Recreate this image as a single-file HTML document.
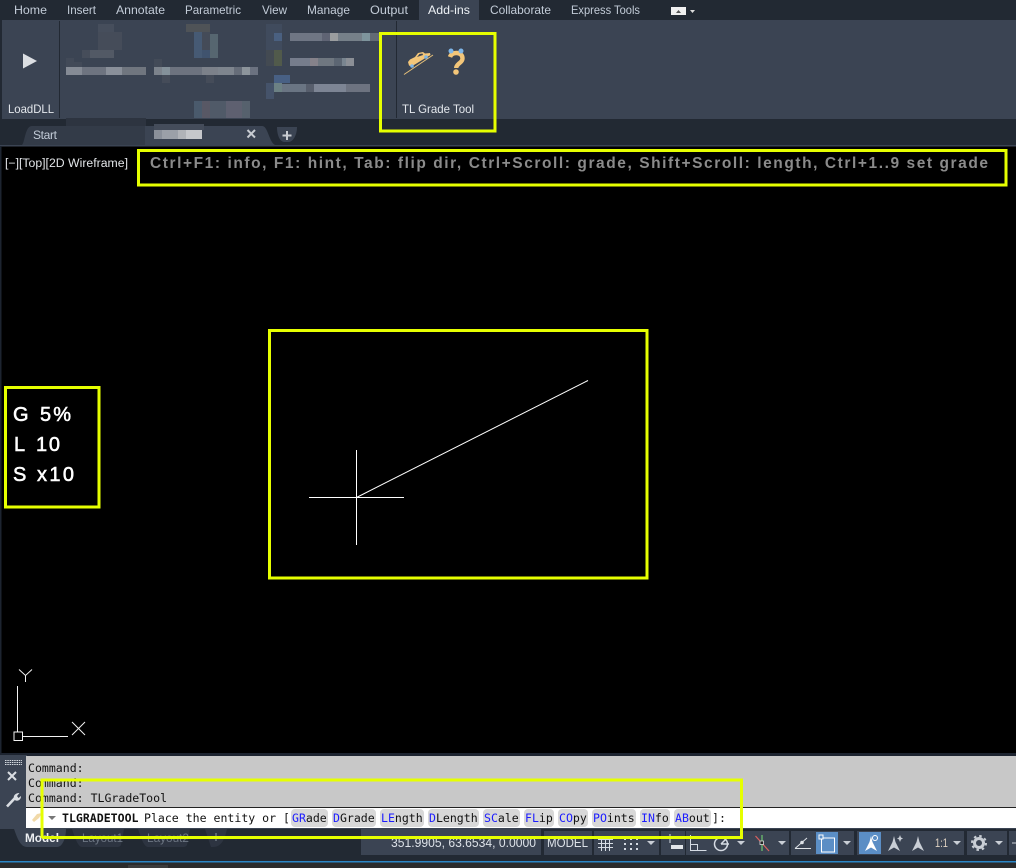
<!DOCTYPE html>
<html><head><meta charset="utf-8"><title>TL Grade Tool</title>
<style>
html,body{margin:0;padding:0;background:#000;width:1016px;height:868px;overflow:hidden}
svg{display:block}
.t{font:12px "Liberation Sans",sans-serif;fill:#c3ccd8}
.m{font:11.55px "DejaVu Sans Mono","Liberation Mono",monospace;fill:#111}
.b{fill:#1c1cff}
.h{font:bold 15.5px "Liberation Sans",sans-serif;fill:#8b8b8b}
.o{font:20px "Liberation Sans",sans-serif;fill:#fff;stroke:#fff;stroke-width:.55px}
.s{font:13px "Liberation Sans",sans-serif;fill:#dde2e8}
</style></head><body>
<svg width="1016" height="868" viewBox="0 0 1016 868" xmlns="http://www.w3.org/2000/svg">
<rect width="1016" height="868" fill="#000"/>
<!-- top tabs -->
<rect width="1016" height="20" fill="#222933"/>
<rect x="419" width="60" height="20" fill="#3b4453"/>
<g class="t">
<text x="14" y="14" textLength="33" lengthAdjust="spacingAndGlyphs">Home</text>
<text x="67" y="14" textLength="29" lengthAdjust="spacingAndGlyphs">Insert</text>
<text x="116" y="14" textLength="49" lengthAdjust="spacingAndGlyphs">Annotate</text>
<text x="185" y="14" textLength="56" lengthAdjust="spacingAndGlyphs">Parametric</text>
<text x="262" y="14" textLength="25" lengthAdjust="spacingAndGlyphs">View</text>
<text x="307" y="14" textLength="43" lengthAdjust="spacingAndGlyphs">Manage</text>
<text x="370" y="14" textLength="38" lengthAdjust="spacingAndGlyphs">Output</text>
<text x="428" y="14" textLength="42" lengthAdjust="spacingAndGlyphs" style="fill:#eef2f6">Add-ins</text>
<text x="490" y="14" textLength="61" lengthAdjust="spacingAndGlyphs">Collaborate</text>
<text x="571" y="14" textLength="69" lengthAdjust="spacingAndGlyphs">Express Tools</text>
</g>
<rect x="671" y="7" width="15" height="8" fill="#f0f0f0"/>
<path d="M676 13h5l-2.500-3z" fill="#555"/>
<path d="M690 10h5l-2.500 3z" fill="#ddd"/>
<!-- ribbon -->
<rect y="20" width="1016" height="99" fill="#3b4453"/>
<rect x="0" y="20" width="2" height="99" fill="#222933"/>
<rect x="59" y="21" width="1" height="97" fill="#222933"/>
<rect x="396" y="21" width="1" height="97" fill="#222933"/>
<path d="M23 53.500 37 61 23 68.500z" fill="#dcdfe3"/>
<text class="t" x="8" y="113" textLength="46" lengthAdjust="spacingAndGlyphs" style="fill:#e4e8ed">LoadDLL</text>
<text class="t" x="402" y="113" textLength="72" lengthAdjust="spacingAndGlyphs" style="fill:#e4e8ed">TL Grade Tool</text>
<!-- blurred -->
<g>
<rect x="98" y="24" width="16" height="8" fill="#464e5c"/><rect x="98" y="32" width="24" height="18" fill="#454c59"/><rect x="90" y="50" width="24" height="8" fill="#525965"/><rect x="82" y="50" width="8" height="8" fill="#464d5a"/><rect x="66" y="58" width="8" height="8" fill="#424a58"/>
<rect x="186" y="24" width="24" height="8" fill="#4f5357"/><rect x="194" y="32" width="8" height="26" fill="#465a74"/><rect x="202" y="32" width="8" height="26" fill="#444b58"/><rect x="210" y="34" width="8" height="24" fill="#566670"/><rect x="202" y="50" width="8" height="8" fill="#40536e"/>
<rect x="266" y="24" width="16" height="42" fill="#404b5d"/><rect x="274" y="33" width="8" height="8" fill="#4a6080"/><rect x="266" y="50" width="8" height="16" fill="#434a52"/><rect x="274" y="50" width="8" height="16" fill="#515a4b"/><rect x="274" y="75" width="16" height="8" fill="#486084"/><rect x="274" y="83" width="8" height="9" fill="#6c8184"/><rect x="266" y="83" width="8" height="16" fill="#45536a"/>
<rect x="66" y="62" width="16" height="5" fill="#424a58"/><rect x="154" y="59" width="8" height="8" fill="#434b58"/><rect x="206" y="75" width="8" height="8" fill="#454c59"/><rect x="162" y="75" width="8" height="8" fill="#454c59"/>
</g>
<g>
<rect x="66" y="67" width="16" height="8" fill="#858b95"/><rect x="82" y="67" width="24" height="8" fill="#6e7480"/><rect x="106" y="67" width="16" height="8" fill="#8a909a"/><rect x="122" y="67" width="24" height="8" fill="#70767f"/>
<rect x="154" y="67" width="8" height="8" fill="#7c838c"/><rect x="162" y="67" width="8" height="8" fill="#84919a"/><rect x="170" y="67" width="32" height="8" fill="#6d737f"/><rect x="202" y="67" width="16" height="8" fill="#7c818a"/><rect x="218" y="67" width="16" height="8" fill="#7e858e"/><rect x="234" y="67" width="8" height="8" fill="#666d79"/><rect x="242" y="67" width="8" height="8" fill="#8c949b"/><rect x="250" y="67" width="8" height="8" fill="#6b7280"/>
<rect x="290" y="33" width="32" height="8" fill="#6f7684"/><rect x="322" y="33" width="8" height="8" fill="#5f6474"/><rect x="330" y="33" width="8" height="8" fill="#9a9d9f"/><rect x="338" y="33" width="24" height="8" fill="#768089"/><rect x="362" y="33" width="8" height="8" fill="#7e949c"/><rect x="370" y="33" width="10" height="8" fill="#626a74"/>
<rect x="290" y="58" width="20" height="8" fill="#767d8c"/><rect x="310" y="58" width="8" height="8" fill="#85828a"/><rect x="318" y="58" width="16" height="8" fill="#6f7780"/><rect x="334" y="58" width="8" height="8" fill="#5c6673"/><rect x="342" y="58" width="4" height="8" fill="#798590"/><rect x="346" y="58" width="8" height="8" fill="#8b8f96"/>
<rect x="282" y="84" width="24" height="8" fill="#6a7583"/><rect x="306" y="84" width="8" height="8" fill="#575e6c"/><rect x="314" y="84" width="32" height="8" fill="#7d8594"/><rect x="346" y="84" width="24" height="8" fill="#6d7380"/>
<rect x="194" y="101" width="8" height="17" fill="#4a5a6c"/><rect x="202" y="101" width="8" height="17" fill="#585865"/><rect x="210" y="101" width="16" height="17" fill="#505a68"/><rect x="226" y="101" width="16" height="17" fill="#5e6070"/><rect x="242" y="101" width="8" height="17" fill="#56616d"/>
</g>
<!-- car icon -->
<path d="M404 74.500 433 55" stroke="#e8c27a" stroke-width="1" fill="none"/>
<path d="M408 62l2-2.500 5-2.500 3-4 5-1 2 1.500 5-.5 .5 2-19 11.500-2.500-1z" fill="#f3c679"/>
<path d="M417 57l2.500-3 3-.5.500 1.500z" fill="#3b4453"/>
<circle cx="412" cy="66" r="1.800" fill="#7eb6e8"/><circle cx="426" cy="57" r="1.800" fill="#7eb6e8"/>
<!-- question icon -->
<path d="M450 57c1-3 3.500-4 6.500-4 3.500 0 6 2 6 5.500 0 3-2.500 4-4 5.500-1.500 1.300-2.300 2.500-2.300 4" stroke="#f3c679" stroke-width="4.400" fill="none"/>
<circle cx="456" cy="72" r="2.800" fill="#f3c679"/>
<circle cx="451" cy="51" r="2.500" fill="#7eb6e8"/><circle cx="461" cy="51" r="2.500" fill="#7eb6e8"/>
<!-- doc tabs -->
<rect y="119" width="1016" height="26" fill="#222933"/>
<rect y="145" width="1016" height="1.500" fill="#3b4453"/>
<rect x="66" y="118" width="80" height="8" fill="#2d3440"/>
<path d="M22 145c3-3 3-19 10-19H146v19z" fill="#333b48"/>
<path d="M145 126H262c6 0 7 16 13 19H145z" fill="#3b4453"/>
<rect x="154" y="130" width="8" height="9" fill="#8a909a"/><rect x="162" y="130" width="16" height="9" fill="#9ba0a8"/><rect x="178" y="130" width="8" height="9" fill="#b0b3b8"/><rect x="186" y="130" width="16" height="9" fill="#c5c7cb"/>
<rect x="154" y="124" width="50" height="6" fill="#444c5a"/>
<text class="t" x="33" y="139" textLength="24">Start</text>
<path d="M247.500 130 255 137.500M255 130 247.500 137.500" stroke="#c8ccd2" stroke-width="2"/>
<path d="M277 127h20c0 7-3 14-8 15h-5c-5-1-7-8-7-15z" fill="#3b4453"/>
<path d="M287 131v9M282.500 135.500h9" stroke="#c8ccd2" stroke-width="2"/>
<!-- viewport -->
<rect x="0" y="146" width="1.500" height="607" fill="#1d2430"/>
<text x="5" y="167" textLength="123" lengthAdjust="spacingAndGlyphs" style="font:11.500px 'Liberation Sans',sans-serif;fill:#e2e5e8">[−][Top][2D Wireframe]</text>
<text class="h" x="150" y="168" textLength="838">Ctrl+F1: info, F1: hint, Tab: flip dir, Ctrl+Scroll: grade, Shift+Scroll: length, Ctrl+1..9 set grade</text>
<g class="o">
<text x="13" y="421">G</text><text x="40" y="421" textLength="31">5%</text>
<text x="14" y="451">L</text><text x="36" y="451" textLength="24">10</text>
<text x="13" y="481">S</text><text x="37" y="481" textLength="37">x10</text>
</g>
<g stroke="#fff" stroke-width="1" fill="none">
<path d="M356.500 450v95M309 497.500h95"/>
<path d="M356.500 497.500 588 380.500"/>
</g>
<g stroke="#f2f2f2" fill="none" stroke-width="1">
<path d="M17.500 686v46M22 736.500h46"/>
<rect x="14" y="732" width="8.500" height="8.500"/>
<path d="M19 669.500 25.500 675.500 32 669.500M25.500 675.500V682"/>
<path d="M72 722 85 735M85 722 72 735"/>
</g>
<!-- command area -->
<rect y="753" width="1016" height="3" fill="#1d2430"/>
<rect y="755" width="27" height="74" fill="#3b4453"/>
<rect x="26" y="756" width="990" height="51" fill="#c8c8c8"/>
<rect x="26" y="807" width="990" height="1" fill="#222"/>
<rect x="26" y="808" width="990" height="20" fill="#fff"/>
<rect x="26" y="828" width="990" height="1" fill="#3b4453"/>
<path d="M5 760.500h17M5 762.500h17M5 764.500h17" stroke="#d6dbe0" stroke-width="1" stroke-dasharray="1.500 .8"/>
<path d="M8 772 16 780M16 772 8 780" stroke="#d9dde2" stroke-width="2"/>
<path d="M7 806.500 15 798" stroke="#d9dde2" stroke-width="2.600" fill="none"/>
<path d="M14 799c-1-3 1-6 5.500-6l-2.500 3 1.500 2 2.500-2c.3 3-2.500 5.500-5.500 4.500z" fill="#d9dde2"/>
<g class="m">
<text x="28" y="772">Command:</text>
<text x="28" y="787">Command:</text>
<text x="28" y="802">Command: TLGradeTool</text>
</g>
<path d="M32 820l5-6 5-1-3 5-5 4z" fill="#f1d9a8"/>
<path d="M48 816h8l-4 4z" fill="#777"/>
<g fill="#d8d8d8">
<rect x="291" y="809" width="37" height="18" rx="4"/><rect x="332" y="809" width="44" height="18" rx="4"/><rect x="380" y="809" width="44" height="18" rx="4"/><rect x="428" y="809" width="51" height="18" rx="4"/><rect x="483" y="809" width="37" height="18" rx="4"/><rect x="524" y="809" width="30" height="18" rx="4"/><rect x="558" y="809" width="30" height="18" rx="4"/><rect x="592" y="809" width="44" height="18" rx="4"/><rect x="640" y="809" width="30" height="18" rx="4"/><rect x="674" y="809" width="37" height="18" rx="4"/>
</g>
<g class="m">
<text x="62" y="822" style="font-weight:bold">TLGRADETOOL</text>
<text x="144" y="822">Place the entity or [</text>
<text x="292" y="822"><tspan class="b">GR</tspan>ade</text>
<text x="333" y="822"><tspan class="b">D</tspan>Grade</text>
<text x="381" y="822"><tspan class="b">LE</tspan>ngth</text>
<text x="429" y="822"><tspan class="b">D</tspan>Length</text>
<text x="484" y="822"><tspan class="b">SC</tspan>ale</text>
<text x="525" y="822"><tspan class="b">FL</tspan>ip</text>
<text x="559" y="822"><tspan class="b">CO</tspan>py</text>
<text x="593" y="822"><tspan class="b">PO</tspan>ints</text>
<text x="641" y="822"><tspan class="b">IN</tspan>fo</text>
<text x="675" y="822"><tspan class="b">AB</tspan>out</text>
<text x="712" y="822">]:</text>
</g>
<!-- status bar -->
<rect y="829" width="1016" height="32" fill="#222933"/>
<rect y="861" width="1016" height="1.500" fill="#2b86c5"/>
<rect y="862.500" width="1016" height="6" fill="#2b2b2b"/>
<rect x="128" y="865" width="40" height="3" fill="#3c3c3c"/>
<path d="M14 829h52c0 8-3 18-9 18H27c-7 0-10-10-13-18z" fill="#3b4453"/>
<path d="M72 829h52l-3 16c-1 2-3 2-4 2H82c-4 0-7-9-10-18z" fill="#2d3441"/>
<path d="M138 829h52l-3 16c-1 2-3 2-4 2H148c-4 0-7-9-10-18z" fill="#2d3441"/>
<path d="M205 829h22c-2 9-5 18-14 18h-2z" fill="#2d3441"/>
<text x="25" y="842" textLength="34" lengthAdjust="spacingAndGlyphs" style="font:bold 12px 'Liberation Sans',sans-serif;fill:#eef0f3">Model</text>
<text x="82" y="842" textLength="41" lengthAdjust="spacingAndGlyphs" style="font:12px 'Liberation Sans',sans-serif;fill:#6d7683">Layout1</text>
<text x="147" y="842" textLength="42" lengthAdjust="spacingAndGlyphs" style="font:12px 'Liberation Sans',sans-serif;fill:#6d7683">Layout2</text>
<path d="M216 833v8M212 837h8" stroke="#6d7683" stroke-width="1.500"/>
<g fill="#3b4453">
<rect x="361" y="829" width="180" height="26"/><rect x="544" y="831" width="48" height="24"/><rect x="594" y="831" width="65" height="24"/><rect x="661" y="831" width="24" height="24"/><rect x="686" y="831" width="103" height="24"/><rect x="791" y="831" width="63" height="24"/><rect x="857" y="831" width="107" height="24"/><rect x="967" y="831" width="40" height="24"/><rect x="1009" y="831" width="7" height="24"/>
</g>
<text class="s" x="391" y="847" textLength="145" lengthAdjust="spacingAndGlyphs">351.9905, 63.6534, 0.0000</text>
<text class="s" x="547" y="847" textLength="41" lengthAdjust="spacingAndGlyphs">MODEL</text>
<g stroke="#d5dbe3" fill="none" stroke-width="1">
<path d="M598 839.500h15M598 843.500h15M598 847.500h15M601.500 836v15M605.500 836v15M609.500 836v15"/>
<path d="M624 839h2M630 839h2M636 839h2M624 844h2M630 844h2M636 844h2M624 849h2M630 849h2M636 849h2" stroke-width="2"/>
<path d="M665.500 838.500h9M670 834v9"/>
<path d="M690.500 835v15.500h16M690.500 844.500h7v6"/>
<circle cx="721" cy="844" r="6.500" stroke-width="1.500"/><path d="M721 844l5-5M721 844h8" stroke-width="1.500"/>
</g>
<rect x="671" y="845" width="12" height="4" fill="#e3e6ea"/>
<g fill="#c9ced5">
<path d="M647 841h8l-4 4z"/><path d="M737 841h8l-4 4z"/><path d="M778 841h8l-4 4z"/><path d="M843 841h8l-4 4z"/><path d="M953 841h8l-4 4z"/><path d="M995 841h8l-4 4z"/>
</g>
<path d="M755.500 836 769 851" stroke="#d9605f" stroke-width="1.200"/>
<path d="M762 835v16" stroke="#6fc66f" stroke-width="1.200"/>
<rect x="760" y="841" width="3.500" height="3.500" fill="#222" stroke="#eee" stroke-width=".7"/>
<path d="M795 848.500 807 838M795 848.500h16" stroke="#dfe3e8" stroke-width="1" fill="none"/>
<circle cx="802" cy="842.500" r="1.800" fill="#dfe3e8"/>
<rect x="816" y="832" width="22" height="22" fill="#5b8ec5"/>
<path d="M821.500 838h13v14h-13z" fill="none" stroke="#fff" stroke-width="1"/>
<rect x="819" y="835" width="4" height="4" fill="#5b8ec5" stroke="#fff" stroke-width="1"/>
<rect x="859" y="832" width="22" height="22" fill="#5b8ec5"/>
<path d="M871 836l1.500 6 4.500 9-6-3.500-6 3.500 4.500-9z" fill="#fff"/>
<circle cx="875" cy="838" r="2.500" fill="none" stroke="#fff"/>
<path d="M894 836l1.500 6 4.500 9-6-3.500-6 3.500 4.500-9z" fill="#c9ced5"/><path d="M900 835l1 2.500 2 1-2 1-1 2.500-1-2.500-2-1 2-1z" fill="#c9ced5"/>
<path d="M918 836l1.500 6 4.500 9-6-3.500-6 3.500 4.500-9z" fill="#c9ced5"/>
<text x="935" y="847" textLength="13" lengthAdjust="spacingAndGlyphs" style="font:12px 'Liberation Sans',sans-serif;fill:#e0d4c4">1:1</text>
<circle cx="979" cy="843" r="4.500" fill="none" stroke="#c9ced5" stroke-width="3"/>
<circle cx="979" cy="843" r="7" fill="none" stroke="#c9ced5" stroke-width="2" stroke-dasharray="2.500 3"/>
<path d="M1012 843h4" stroke="#c9ced5"/>
<!-- yellow annotations -->
<g fill="none" stroke="#e6ff00" stroke-width="3">
<rect x="380.500" y="33.500" width="114.500" height="97.500"/>
<rect x="138.500" y="150.500" width="867.500" height="34.500"/>
<rect x="269.500" y="330.500" width="377.500" height="247.500"/>
<rect x="5.500" y="387.500" width="93.500" height="119.500"/>
<path d="M42 838V780H741.500V837.500H42"/>
</g>
</svg>
</body></html>
